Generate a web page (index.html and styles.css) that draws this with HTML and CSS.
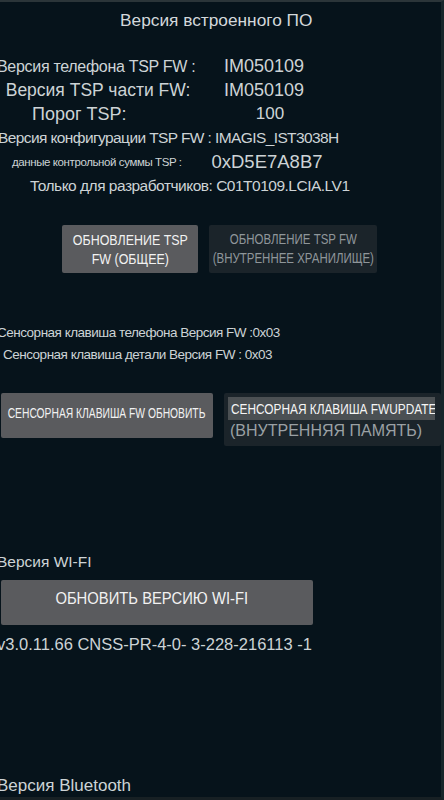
FILE: index.html
```html
<!DOCTYPE html>
<html lang="ru">
<head>
<meta charset="utf-8">
<title>Версия встроенного ПО</title>
<link rel="stylesheet" href="styles.css">
</head>
<body>
<div class="screen">
  <h1 class="title">Версия встроенного ПО</h1>

  <div class="info">
    <div class="row">
      <span class="label label-phone">Версия телефона TSP FW :</span>
      <span class="value">IM050109</span>
    </div>
    <div class="row">
      <span class="label label-part">Версия TSP части FW:</span>
      <span class="value">IM050109</span>
    </div>
    <div class="row">
      <span class="label label-threshold">Порог TSP:</span>
      <span class="value value-threshold">100</span>
    </div>
    <div class="line line-config">Версия конфигурации TSP FW : IMAGIS_IST3038H</div>
    <div class="row">
      <span class="label label-small">данные контрольной суммы TSP :</span>
      <span class="value value-checksum">0xD5E7A8B7</span>
    </div>
    <div class="line line-dev">Только для разработчиков: C01T0109.LCIA.LV1</div>
  </div>

  <div class="btn-row btn-row-tsp">
    <div class="btn btn-active btn-tsp-general"><span class="cond">ОБНОВЛЕНИЕ TSP<br>FW (ОБЩЕЕ)</span></div>
    <div class="btn btn-disabled btn-tsp-internal"><span class="cond">ОБНОВЛЕНИЕ TSP FW<br>(ВНУТРЕННЕЕ ХРАНИЛИЩЕ)</span></div>
  </div>

  <div class="touchkey">
    <div class="tk-line tk-phone">Сенсорная клавиша телефона Версия FW :0x03</div>
    <div class="tk-line tk-part">Сенсорная клавиша детали Версия FW : 0x03</div>
  </div>

  <div class="btn-row btn-row-tk">
    <div class="btn btn-active btn-tk-update"><span class="cond">СЕНСОРНАЯ КЛАВИША FW ОБНОВИТЬ</span></div>
    <div class="btn-box btn-disabled btn-tk-internal">
      <div class="selected"><span class="cond-left">СЕНСОРНАЯ КЛАВИША FWUPDATE</span></div>
      <div class="tk-mem">(ВНУТРЕННЯЯ ПАМЯТЬ)</div>
    </div>
  </div>

  <div class="section-label wifi-label">Версия WI-FI</div>
  <div class="btn btn-active btn-wifi"><span class="cond">ОБНОВИТЬ ВЕРСИЮ WI-FI</span></div>
  <div class="wifi-version">v3.0.11.66 CNSS-PR-4-0- 3-228-216113 -1</div>

  <div class="section-label bt-label">Версия Bluetooth</div>
</div>
</body>
</html>
```

FILE: styles.css
```css
html, body {
  margin: 0;
  padding: 0;
  background: #06131b;
}

body {
  width: 444px;
  height: 800px;
  overflow: hidden;
  font-family: "Liberation Sans", Arial, sans-serif;
  color: #cdd3d6;
}

.screen {
  box-sizing: border-box;
  width: 444px;
  height: 800px;
  border-top: 2px solid #2b3539;
  border-right: 3px solid #17252a;
  border-bottom: 3px solid #172024;
  overflow: hidden;
}

.title {
  margin: 6px 0 0 0;
  padding-left: 120px;
  font-size: 17.3px;
  font-weight: normal;
  line-height: 24px;
  color: #d3d8db;
}

.info {
  margin-top: 23px;
}

.row {
  display: grid;
  grid-template-columns: 194px 140px;
  align-items: center;
  height: 23.8px;
  margin-left: -3px;
}

.label {
  text-align: center;
  font-size: 16px;
  white-space: nowrap;
}

.label-phone {
  font-size: 16px;
  letter-spacing: -0.3px;
}

.label-part {
  font-size: 17.5px;
  padding-left: 8px;
}

.label-threshold {
  font-size: 18px;
  text-align: left;
  padding-left: 35px;
}

.label-small {
  font-size: 11.5px;
  letter-spacing: -0.4px;
  text-align: left;
  padding-left: 15px;
}

.value {
  text-align: center;
  font-size: 18px;
  padding-left: 6px;
}

.value-threshold {
  font-size: 17px;
  padding-left: 18px;
}

.value-checksum {
  font-size: 18.5px;
  padding-left: 12px;
}

.line {
  height: 23.8px;
  line-height: 23.8px;
  white-space: nowrap;
  font-size: 15.5px;
  letter-spacing: -0.6px;
}

.line-config {
  margin-left: -2px;
}

.line-dev {
  margin-left: 30px;
  letter-spacing: -0.5px;
}

.btn-row {
  display: flex;
  align-items: flex-start;
}

.btn {
  box-sizing: border-box;
  border-radius: 2px;
  display: flex;
  justify-content: center;
  align-items: center;
  text-align: center;
  white-space: nowrap;
}

.btn-box {
  box-sizing: border-box;
  border-radius: 2px;
  white-space: nowrap;
}

.cond {
  display: block;
  flex: none;
  transform: scaleX(0.83);
  transform-origin: center;
}

.cond-left {
  display: inline-block;
  vertical-align: top;
  transform: scaleX(0.79);
  transform-origin: left center;
}

.btn-active {
  background: #5a5b5e;
  color: #f2f2f2;
}

.btn-disabled {
  background: #1b242a;
  color: #8f969a;
}

.btn-row-tsp {
  margin-top: 27px;
  padding-left: 62px;
  gap: 11px;
}

.btn-tsp-general {
  width: 136px;
  height: 48px;
  font-size: 15px;
  line-height: 19px;
}

.btn-tsp-internal {
  width: 168px;
  height: 48px;
  font-size: 14px;
  line-height: 19px;
}

.btn-tsp-internal .cond {
  transform: scaleX(0.82);
}

.touchkey {
  margin-top: 49px;
}

.tk-line {
  height: 22px;
  line-height: 22px;
  font-size: 13.5px;
  letter-spacing: -0.5px;
  white-space: nowrap;
}

.tk-phone {
  margin-left: -3px;
}

.tk-part {
  margin-left: 3px;
}

.btn-row-tk {
  margin-top: 27px;
  padding-left: 1px;
  gap: 11px;
}

.btn-tk-update {
  width: 212px;
  height: 45px;
  padding-bottom: 4px;
  font-size: 14px;
  line-height: 18px;
}

.btn-tk-update .cond {
  transform: scaleX(0.735);
}

.btn-tk-internal {
  width: 218px;
  height: 53px;
  padding: 4px 0 0 4px;
}

.selected {
  width: 207px;
  height: 23px;
  box-sizing: border-box;
  overflow: hidden;
  background: #4b5053;
  color: #f5f5f5;
  font-size: 15px;
  line-height: 23px;
  padding-left: 3px;
}

.tk-mem {
  height: 22px;
  font-size: 16px;
  line-height: 22px;
  padding-left: 2px;
  color: #9aa0a4;
}

.section-label {
  height: 22px;
  line-height: 22px;
  font-size: 15.5px;
  margin-left: -3px;
  white-space: nowrap;
}

.wifi-label {
  margin-top: 105px;
}

.btn-wifi {
  margin: 7px 0 0 1px;
  width: 312px;
  height: 45px;
  padding: 0 10px 6px 0;
  font-size: 17px;
  line-height: 20px;
}

.btn-wifi .cond {
  transform: scaleX(0.87);
}

.wifi-version {
  margin: 8px 0 0 -3px;
  height: 22px;
  line-height: 22px;
  font-size: 16.5px;
  white-space: nowrap;
}

.bt-label {
  margin-top: 120px;
  font-size: 17px;
}
```
